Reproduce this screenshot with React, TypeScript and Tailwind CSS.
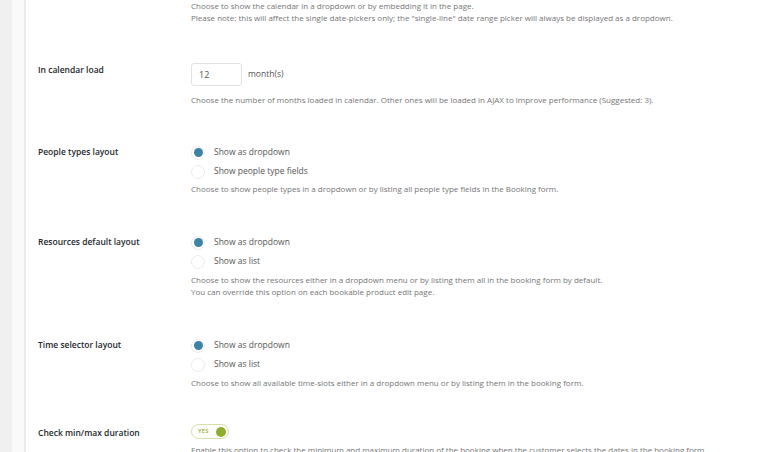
import React from 'react';

const font = { fontFamily: '"Open Sans", "Liberation Sans", sans-serif' };

const Radio = ({ checked, label }: { checked?: boolean; label: string }) => (
    <div className="flex items-center h-[19px]">
        <span className="w-[14px] h-[14px] rounded-full border border-[#ececec] bg-white flex items-center justify-center">
            {checked && <span className="w-[9px] h-[9px] rounded-full bg-[#3d84a3]" />}
        </span>
        <span className="ml-[9px] text-[8.5px] text-[#555]">{label}</span>
    </div>
);

const Desc = ({ children }: { children: React.ReactNode }) => (
    <div className="text-[8px] leading-[12px] text-[#757575]">{children}</div>
);

const Label = ({ children, className = '' }: { children: React.ReactNode; className?: string }) => (
    <div className={`w-[153px] shrink-0 text-[8.5px] leading-[14px] font-semibold text-[#23282d] ${className}`}>{children}</div>
);

const Row = ({ label, className = 'pt-[37px]', children }: { label: string; className?: string; children: React.ReactNode }) => (
    <div className={`flex ${className}`}>
        <Label className="pt-[2px]">{label}</Label>
        <div className="flex-1">{children}</div>
    </div>
);

export default function App() {
    return (
        <div className="h-[452px] overflow-hidden flex bg-white" style={font}>
            <div className="w-[12px] bg-[#f0f0f1]" />
            <div className="w-[12px] bg-[#fafafa]" />
            <div className="w-[2px] bg-[#ebebeb]" />
            <main className="flex-1 pl-[12px]">
                {/* tail of previous setting */}
                <div className="pl-[153px]">
                    <Desc>
                        Choose to show the calendar in a dropdown or by embedding it in the page.
                        <br />
                        Please note: this will affect the single date-pickers only; the "single-line" date range picker will always be displayed as a dropdown.
                    </Desc>
                </div>

                <div className="flex pt-[39px]">
                    <Label>In calendar load</Label>
                    <div className="flex-1">
                        <div className="flex items-center">
                            <div className="w-[51px] h-[23px] border border-[#e2e2e2] rounded-[3px] flex items-center pl-[7px] text-[9px] text-[#555]">12</div>
                            <span className="ml-[6px] text-[8.5px] text-[#555]">month(s)</span>
                        </div>
                        <div className="mt-[8px]">
                            <Desc>Choose the number of months loaded in calendar. Other ones will be loaded in AJAX to improve performance (Suggested: 3).</Desc>
                        </div>
                    </div>
                </div>

                <Row label="People types layout">
                    <Radio checked label="Show as dropdown" />
                    <Radio label="Show people type fields" />
                    <div className="mt-[2px]">
                        <Desc>Choose to show people types in a dropdown or by listing all people type fields in the Booking form.</Desc>
                    </div>
                </Row>

                <Row label="Resources default layout" className="pt-[38px]">
                    <Radio checked label="Show as dropdown" />
                    <Radio label="Show as list" />
                    <div className="mt-[3px]">
                        <Desc>
                            Choose to show the resources either in a dropdown menu or by listing them all in the booking form by default.
                            <br />
                            You can override this option on each bookable product edit page.
                        </Desc>
                    </div>
                </Row>

                <Row label="Time selector layout" className="pt-[38px]">
                    <Radio checked label="Show as dropdown" />
                    <Radio label="Show as list" />
                    <div className="mt-[3px]">
                        <Desc>Choose to show all available time-slots either in a dropdown menu or by listing them in the booking form.</Desc>
                    </div>
                </Row>

                <Row label="Check min/max duration" className="pt-[35px]">
                    <div className="w-[38px] h-[15px] rounded-full border border-[#d3dfa3] flex items-center justify-between pl-[6px] pr-[2px]">
                        <span className="text-[6px] font-semibold text-[#8fae2d] tracking-wide">YES</span>
                        <span className="w-[10px] h-[10px] rounded-full bg-[#8fae2d]" />
                    </div>
                    <div className="mt-[5px]">
                        <Desc>Enable this option to check the minimum and maximum duration of the booking when the customer selects the dates in the booking form.</Desc>
                    </div>
                </Row>
            </main>
        </div>
    );
}
